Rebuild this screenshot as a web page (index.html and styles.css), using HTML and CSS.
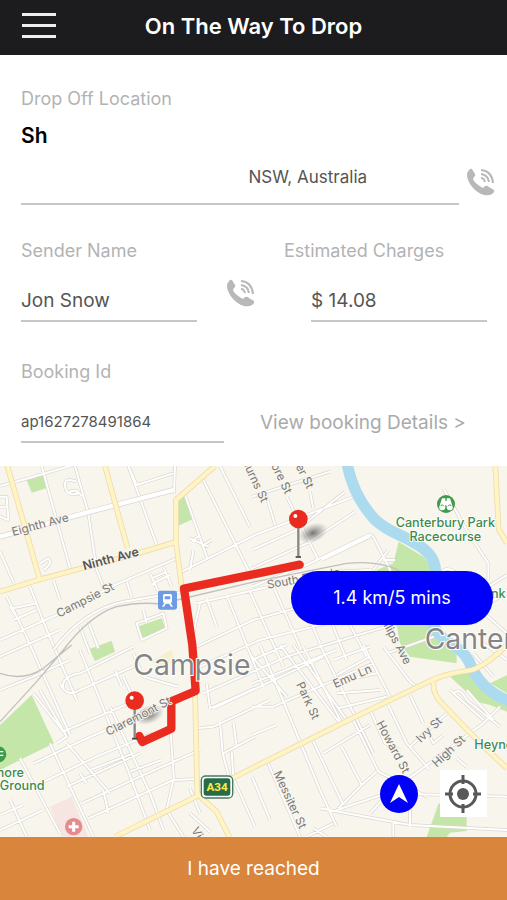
FILE: index.html
```html
<!DOCTYPE html>
<html lang="en">
<head>
<meta charset="utf-8">
<meta name="viewport" content="width=device-width, initial-scale=1">
<title>On The Way To Drop</title>
<link rel="stylesheet" href="styles.css">
</head>
<body>
<svg class="defs" aria-hidden="true">
  <symbol id="phone" viewBox="0 0 28 28">
    <path fill="currentColor" d="M2 2Q4 0 5 1L8 6Q9 8 7 9L6 11Q7 15 16 20L18 18Q20 17 22 19L27 22Q28 24 25 26Q22 28 17 27C9 25 1 16 0 8Q0 4 2 2Z"/>
    <g fill="none" stroke="currentColor" stroke-width="2"><path d="M14 2Q25 3 26 15M14 6Q21 7 22 14M14 10Q17 10 18 14"/></g>
  </symbol>
</svg>
<header class="topbar">
  <button class="menu" aria-label="Menu"><span></span><span></span><span></span></button>
  <h1>On The Way To Drop</h1>
</header>
<main>
  <form class="details">
    <section class="dropoff">
      <label for="address">Drop Off Location</label>
      <strong>Sh</strong>
      <div class="address-row">
        <input id="address" class="address" value="NSW, Australia" readonly>
        <button type="button" class="call" aria-label="Call recipient"><svg><use href="#phone"/></svg></button>
      </div>
    </section>
    <section class="sender">
      <div class="field"><label for="sender">Sender Name</label><input id="sender" value="Jon Snow" readonly></div>
      <button type="button" class="call" aria-label="Call sender"><svg><use href="#phone"/></svg></button>
      <div class="field charges"><label for="charges">Estimated Charges</label><div class="indent"><input id="charges" value="$ 14.08" readonly></div></div>
    </section>
    <section class="booking">
      <div class="field"><label for="booking">Booking Id</label><input id="booking" class="small" value="ap1627278491864" readonly></div>
      <a href="#details">View booking Details &gt;</a>
    </section>
  </form>
  <section class="map" aria-label="Route map">
    <svg class="canvas" viewBox="0 18 1521 1113" preserveAspectRatio="xMidYMid slice">
      <defs>
        <path id="streets" d="M0 78L85 55L220 15M125 18L210 325M225 18L265 160L290 330L312 385M385 18L470 255M525 18L522 100M410 75L520 40M410 75L385 18M0 275L42 370M555 105L622 295M605 50L745 330M660 18L750 200M545 335L765 225L920 165L1066 108M0 540L170 465L345 375L530 295M90 380L130 485L230 720M20 410L75 520L210 825M160 360L180 420M130 330Q160 310 145 295L120 310M450 340L475 395M490 320L515 380M455 355L500 335M455 372L510 345M380 365L395 410M265 485L295 565M240 500L270 580M230 65Q190 50 195 80T235 100M200 100Q230 80 245 110M40 445L110 430M40 480L110 450M50 470L30 440M0 110H20L25 180L0 170M0 140H20M570 235L625 260M575 245L600 225M610 255L635 240M580 270L570 330M430 450L440 490
        M410 490L490 460L500 505L425 540Z
        M590 430L765 390L1000 335L1110 330M600 430L580 520M620 415L650 500M680 405L790 680M750 395L850 620M820 380L900 560M880 360L960 550M940 350L1040 600M1000 400L1100 590M590 560L760 480L1010 410M600 620L780 540L1100 460M610 700L860 590L1190 490M640 745L800 670L970 590
        M756 325L920 250L1066 155M756 270L890 210L1035 95M756 110L990 35M800 110L825 195M860 110L955 300M930 95L940 145M756 380L920 315L1105 225Q1120 225 1125 240L1185 360M965 300L1110 230M1120 330L1165 270M1150 300H1185M1330 85L1400 210L1465 310V360M1320 350Q1330 310 1370 340M1400 420L1521 345M1425 450L1521 400M1430 440L1521 520
        M0 690L100 650L210 600M0 590L180 510M100 700L190 815L410 720M120 690L200 830L170 850M60 895L100 970L180 1120M150 850L280 1130M180 670Q200 715 240 690L400 620M190 690Q180 650 240 640L400 560M240 570L380 920L450 1110M345 630L365 680M400 580L430 650L535 680M330 740L450 1000L490 1110M370 650L420 760
        M100 910L250 840L420 765M110 975L300 885L460 820M200 850L330 1000M200 980L420 880M245 1030L420 950L600 870M265 1075L520 960L640 955M270 930L400 880M240 940L260 970M310 990L325 1060M485 900L390 935M510 790L522 960M520 960L500 1050L550 1130M0 1065L70 1035M0 1110L130 1050M30 1020L80 1130M570 985L600 1060M570 1060L630 1115
        M630 745L620 670M630 745L765 685M640 800L590 805M660 785L668 880L700 1000M670 880L765 830M700 785L710 860M640 800L810 720M695 875L700 955L765 1100
        M756 590L860 710M756 670L1010 570M756 740L820 740L1120 610M756 825L830 795M756 600L860 555M780 555L960 990L1010 1100M840 555L1020 790M880 555L1040 780M910 560L1025 790M960 555L1120 880M1000 600L1110 560M1010 645L1110 590M1015 665L1130 640M1010 700L1140 690M1015 745L1160 710M1090 555L1170 710M1150 560L1230 665L1250 680M1160 580L1330 520
        M940 845L1030 1035M970 880L1110 795M1060 780L1135 935L1280 1010M1110 750L1155 850L1200 870M1025 860L1085 975L1130 935M1085 975L1015 1045M1165 735L1220 850L1290 930M1230 705L1270 790M1230 860L1340 760M1220 960L1450 790L1500 740M1290 830L1300 850L1330 825M1370 895L1400 920M1110 1060L1210 950M960 1045L1230 1095L1521 1110M1010 1050L1160 1000L1521 1010M1180 1085V1130M1230 1100V960M920 1130L1000 1090M1350 690L1450 780M1400 690L1480 780M1360 700Q1380 680 1400 720L1500 800M1420 580L1480 650M1450 550L1521 600M940 1105L980 1130M800 900L900 1130M756 950L810 1080"/>
        <path id="avenues" d="M22 18L60 150L118 355M315 18L355 165L383 265M0 395L120 358L245 325L420 278L525 247M645 18L528 120V247L545 380M585 690L592 1008M345 1130L592 1008L765 920L1026 790L1296 660Q1340 640 1416 630Q1460 615 1521 555M600 1010L650 1055L688 1131M1301 665Q1295 700 1330 735L1446 855L1521 925M1486 18L1496 208L1521 250"/>
        <radialGradient id="shadow"><stop offset="0" stop-color="#555" stop-opacity=".8"/><stop offset="1" stop-color="#777" stop-opacity="0"/></radialGradient>
        <g id="pin">
          <ellipse cx="44" cy="42" rx="46" ry="28" fill="url(#shadow)" transform="rotate(-22 44 42)"/>
          <path d="M0 20V113" stroke="#888" stroke-width="7"/><path d="M-8 114H8" stroke="#444" stroke-width="5"/>
          <circle r="28" fill="#ea2b20"/><circle cx="-9" cy="-9" r="6" fill="#fff"/>
        </g>
      </defs>
      <rect y="18" width="1521" height="1113" fill="#f8f5ed"/>
      <g class="park">
        <path d="M80 60L130 45L138 85L95 98ZM535 120L555 108L578 178L535 197ZM412 500L485 475L495 505L430 533ZM268 568L335 542L345 575L285 603ZM95 705L162 850L60 900L0 930V795ZM1196 245L1270 290L1310 340L1310 510L1370 560V610L1230 590L1200 550L1190 495L1130 330L1180 310ZM1351 650L1400 630L1450 690L1521 720V755L1470 735L1430 725ZM1470 670L1521 645V700ZM1316 1030L1400 1060V1113L1350 1118L1340 1131H1280Z"/>
      </g>
      <path fill="#f7e5e2" d="M150 1040L215 1010L265 1130H185Z"/>
      <path fill="#f5f0c8" d="M450 605L515 570L525 605L480 620Z"/>
      <use href="#streets" class="street-edge"/><use href="#streets" class="street"/>
      <path class="street-edge wide" d="M0 230L270 155L520 90"/><path class="street wide" d="M0 230L270 155L520 90"/>
      <path class="street-edge" d="M160 570Q250 450 370 425L550 395"/><path class="street" d="M160 570Q250 450 370 425L550 395"/>
      <path class="rail" d="M0 785L110 665L190 570Q270 465 350 440Q420 425 480 432L765 365L1040 310Q1150 300 1210 340M0 640Q70 665 130 625L215 555"/>
      <path class="river" d="M1041 10Q1060 110 1126 180C1170 220 1200 220 1245 250Q1310 285 1306 340L1285 440Q1290 520 1365 560Q1400 580 1416 625Q1450 695 1531 725"/>
      <use href="#avenues" class="avenue-edge"/><use href="#avenues" class="avenue"/>
      <path class="route" stroke-linecap="round" d="M899 314L552 386L577 555L587 693L514 724V806L427 846L418 828"/>
      <use href="#pin" x="895" y="177"/><use href="#pin" x="404" y="722"/>
      <g class="street-name">
        <text transform="translate(39 228) rotate(-15)">Eighth Ave</text>
        <text class="major" transform="translate(252 331) rotate(-15)">Ninth Ave</text>
        <text transform="translate(177 473) rotate(-27)">Campsie St</text>
        <text transform="translate(325 828) rotate(-27)">Claremont St</text>
        <text transform="translate(725 3) rotate(65)">Burns St</text>
        <text transform="translate(790 -31) rotate(64)">Moore St</text>
        <text transform="translate(860 -36) rotate(64)">Baker St</text>
        <text transform="translate(803 386) rotate(-10)">South Parade</text>
        <text transform="translate(1126 450) rotate(62)">Phillips Ave</text>
        <text transform="translate(1006 685) rotate(-24)">Emu Ln</text>
        <text transform="translate(888 673) rotate(65)">Park St</text>
        <text transform="translate(1128 790) rotate(62)">Howard St</text>
        <text transform="translate(1262 850) rotate(-44)">Ivy St</text>
        <text transform="translate(1310 923) rotate(-43)">High St</text>
        <text transform="translate(820 940) rotate(65)">Messiter St</text>
        <text transform="translate(573 1110) rotate(60)">Vicliffe Ave</text>
      </g>
      <g class="suburb"><text x="400" y="645">Campsie</text><text x="1274" y="566">Canterbury</text></g>
      <g class="park-name">
        <text x="1336" y="200" text-anchor="middle">Canterbury Park</text><text x="1336" y="243" text-anchor="middle">Racecourse</text>
        <text x="1517" y="415" text-anchor="end">Bank</text><text x="1423" y="867">Heynes</text>
        <text x="72" y="950" text-anchor="end">Clemore</text><text x="134" y="991" text-anchor="end">Ground</text>
      </g>
      <circle cx="1338" cy="132" r="27" fill="#3f9b4a"/>
      <path fill="#fff" d="M1326 115H1336V123H1340V115H1350L1358 140Q1360 151 1349 151Q1340 151 1340 142V136H1336V142Q1336 151 1327 151Q1316 151 1318 140Z"/>
      <path fill="none" stroke="#3f9b4a" stroke-width="3" d="M1322 137Q1328 131 1332 139M1344 139Q1348 131 1354 137"/>
      <circle cx="-5" cy="883" r="24" fill="#3f9b4a"/><path stroke="#fff" stroke-width="4" d="M0 875H10M0 886H10"/>
      <rect x="474" y="392" width="57" height="57" rx="7" fill="#6e9be2"/>
      <path fill="#fff" fill-rule="evenodd" d="M494 402H511Q516 402 516 408V424Q516 429 511 429H494Q489 429 489 424V408Q489 402 494 402ZM494 409V418H511V409ZM493 429L486 440H492L498 431H507L513 440H519L512 429Z"/>
      <circle cx="221" cy="1100" r="26" fill="#e58b8e"/><path d="M221 1085V1115M206 1100H236" stroke="#fff" stroke-width="9"/>
      <rect x="604" y="948" width="94" height="66" rx="13" fill="#fff" stroke="#467b61" stroke-width="4"/><rect x="611" y="955" width="80" height="52" rx="8" fill="#286c47"/>
      <text class="shield" x="651" y="994" text-anchor="middle">A34</text>
    </svg>
    <div class="eta">1.4 km/5 mins</div>
    <div class="tools">
      <button class="navigate" aria-label="Navigate"><svg viewBox="0 0 38 38"><path fill="#fff" d="M19 9L28 28L19 22L10 28Z"/></svg></button>
      <button class="locate" aria-label="My location"><svg viewBox="0 0 47 47"><g fill="none" stroke="#58585a" stroke-width="3"><circle cx="23" cy="24" r="13"/><path d="M23 5V14M23 34V43M5 24H13M33 24H41"/></g><circle cx="23" cy="24" r="6" fill="#58585a"/></svg></button>
    </div>
  </section>
</main>
<button class="reached">I have reached</button>
</body>
</html>
```
FILE: styles.css
```css
* { box-sizing: border-box; }
body { margin: 0; min-height: 100vh; display: flex; flex-direction: column; background: #fff; color: #555; font-family: Inter, "Liberation Sans", sans-serif; font-size: 18px; line-height: 24px; }
button { border: 0; padding: 0; background: none; font: inherit; cursor: pointer; }
svg { display: block; }
.defs { position: absolute; width: 0; height: 0; }
.topbar { display: grid; grid-template-columns: 64px 1fr 64px; align-items: center; height: 55px; padding-bottom: 4px; background: #1c1c1e; }
.topbar h1 { margin: 0; color: #fff; font-size: 22px; font-weight: 600; text-align: center; }
.menu { display: grid; gap: 8px; width: 34px; margin-left: 22px; }
.menu span { height: 3px; background: #eee; }
main { flex: 1; display: flex; flex-direction: column; }
.details { padding: 32px 20px 23px 21px; }
label { display: block; color: #b3b3b3; }
input { display: block; width: 100%; min-width: 0; height: 34px; padding: 0 0 8px; border: 0; border-bottom: 2px solid #c6c6c6; border-radius: 0; outline: 0; background: none; color: #555; font: inherit; font-size: 19px; }
.dropoff strong { display: block; margin-top: 13px; color: #000; font-size: 21px; font-weight: 600; }
.address-row { display: flex; align-items: center; gap: 8px; margin: 15px -8px 0 0; }
.address { flex: 1; height: 42px; padding: 0 0 13px 48%; font-size: 17px; }
.call { width: 28px; height: 28px; color: #b8b8b8; }
.call svg { width: 28px; height: 28px; }
.address-row .call { margin-bottom: 4px; }
.sender { display: grid; grid-template-columns: minmax(0, 176fr) 87px minmax(0, 203fr); margin-top: 34px; }
.sender .call { justify-self: center; margin-top: 40px; }
.field label { margin-bottom: 25px; }
.indent { padding-left: 27px; }
.booking { display: flex; align-items: flex-end; gap: 36px; margin-top: 38px; }
.booking .field { flex: 0 1 203px; }
input.small { padding-bottom: 7px; font-size: 15px; }
.booking a { padding-bottom: 8px; color: #aaa; font-size: 19px; text-decoration: none; white-space: nowrap; }
.map { position: relative; flex: 1; min-height: 371px; overflow: hidden; }
.canvas { position: absolute; inset: 0; width: 100%; height: 100%; font-family: Inter, sans-serif; }
.park { fill: #c5e6a9; }
.street-edge, .street, .avenue-edge, .avenue, .rail, .river, .route { fill: none; stroke-linejoin: round; }
.street-edge { stroke: #d9d6cf; stroke-width: 10; }
.street { stroke: #fff; stroke-width: 6; }
.street-edge.wide { stroke-width: 17; }
.street.wide { stroke-width: 13; }
.avenue-edge { stroke: #eedbb0; stroke-width: 17; }
.avenue { stroke: #fff4c4; stroke-width: 12; }
.rail { stroke: #c2c0bc; stroke-width: 4; }
.river { stroke: #acdbef; stroke-width: 34; }
.route { stroke: #ea2b20; stroke-width: 25; }
.street-name { fill: #777; font-size: 35px; stroke: #f8f5ed; stroke-width: 5; paint-order: stroke; }
.major { fill: #555; font-size: 37px; font-weight: 600; }
.suburb { fill: #858585; font-size: 85px; stroke: #fff; stroke-width: 6; paint-order: stroke; }
.park-name { fill: #3f8a4b; font-size: 38px; font-weight: 500; stroke: #fff; stroke-width: 5; paint-order: stroke; }
.shield { fill: #ffe94f; font: 700 35px Roboto, sans-serif; }
.eta { position: absolute; top: 105px; right: 14px; width: 202px; height: 54px; border-radius: 27px; background: #0000fa; color: #fff; line-height: 54px; text-align: center; }
.tools { position: absolute; right: 20px; bottom: 20px; display: flex; align-items: center; gap: 22px; }
.navigate { width: 38px; height: 38px; border-radius: 50%; background: #0000fa; }
.locate { width: 47px; height: 47px; background: #fff; }
.reached { height: 63px; background: #d9853b; color: #fff; font-size: 19px; }
```
